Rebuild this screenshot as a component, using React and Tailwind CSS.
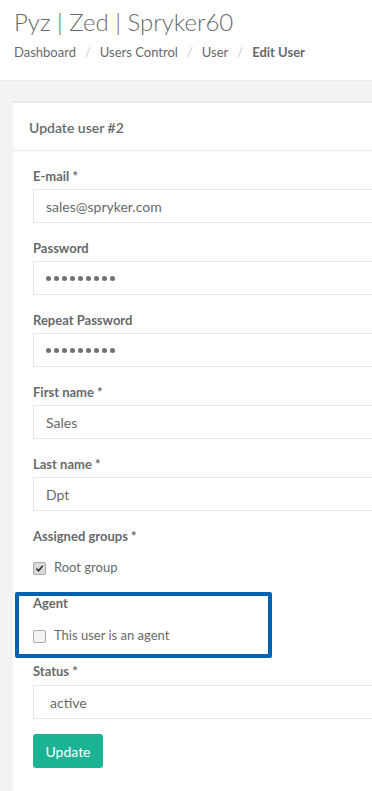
const FIELDS = [
    { label: 'E-mail', required: true, value: 'sales@spryker.com' },
    { label: 'Password', password: true },
    { label: 'Repeat Password', password: true },
    { label: 'First name', required: true, value: 'Sales' },
    { label: 'Last name', required: true, value: 'Dpt' },
];

function FieldLabel({ children, required }) {
    return (
        <label className="block h-5 text-[13px] leading-5 font-bold text-[#676a6c]">
            {children}
            {required && ' *'}
        </label>
    );
}

function Checkbox({ checked }) {
    return (
        <span
            className={`flex h-[13px] w-[13px] items-center justify-center rounded-[2px] border border-[#a9a9a9] ${
                checked ? 'bg-[#dcdcdc]' : 'bg-[#f3f3f3]'
            }`}
        >
            {checked && (
                <svg viewBox="0 0 10 10" className="h-[9px] w-[9px]">
                    <path d="M1.5 5.2 L4 7.6 L8.6 2" fill="none" stroke="#333" strokeWidth="1.9" />
                </svg>
            )}
        </span>
    );
}

function PasswordDots() {
    return (
        <span className="flex gap-[3px]">
            {[1, 2, 3, 4, 5, 6, 7, 8, 9].map((n) => (
                <span key={n} className="h-[5px] w-[5px] rounded-full bg-[#707070]" />
            ))}
        </span>
    );
}

export default function App() {
    return (
        <div className="min-h-[791px] overflow-hidden bg-[#f3f3f4] font-['Lato','Liberation_Sans',sans-serif] text-[13px] text-[#676a6c]">
            <div className="h-[81px] border-b border-[#e7eaec] bg-white pl-[14px] pt-[7px]">
                <h2 className="text-[24px] leading-[30px] font-light text-[#676a6c]">Pyz | Zed | Spryker60</h2>
                <ol className="mt-[5px] flex items-center text-[13px] leading-5">
                    <li>Dashboard</li>
                    <li className="px-[9px] text-[#ccc]">/</li>
                    <li>Users Control</li>
                    <li className="px-[9px] text-[#ccc]">/</li>
                    <li>User</li>
                    <li className="px-[9px] text-[#ccc]">/</li>
                    <li className="font-bold">Edit User</li>
                </ol>
            </div>

            <div className="pl-[13px] pt-[20px]">
                <div className="w-[420px] border-t-2 border-[#e7eaec] bg-white">
                    <div className="h-[48px] border-b border-[#e7eaec] pl-[16px] pt-[15px]">
                        <h5 className="text-[14px] leading-[20px] font-semibold text-[#676a6c]">Update user #2</h5>
                    </div>

                    <div className="relative px-[20px] pt-[15px] pb-[24px]">
                        {FIELDS.map((field) => (
                            <div key={field.label} className="mb-[15px]">
                                <FieldLabel required={field.required}>{field.label}</FieldLabel>
                                <div className="mt-[3px] flex h-[34px] items-center border border-[#e5e6e7] px-[12px] text-[14px] text-[#676a6c]">
                                    {field.password ? <PasswordDots /> : field.value}
                                </div>
                            </div>
                        ))}

                        <div className="mb-[15px]">
                            <FieldLabel required>Assigned groups</FieldLabel>
                            <div className="mt-[12px] flex h-5 items-center gap-[8px] text-[13px]">
                                <Checkbox checked />
                                <span>Root group</span>
                            </div>
                        </div>

                        <div className="mb-[15px]">
                            <FieldLabel>Agent</FieldLabel>
                            <div className="mt-[13px] flex h-5 items-center gap-[8px] text-[13px]">
                                <Checkbox />
                                <span>This user is an agent</span>
                            </div>
                        </div>

                        <div className="mb-[15px]">
                            <FieldLabel required>Status</FieldLabel>
                            <div className="mt-[4px] flex h-[34px] items-center border border-[#e5e6e7] px-[16px] text-[14px]">
                                active
                            </div>
                        </div>

                        <button className="h-[34px] w-[70px] rounded-[3px] bg-[#1ab394] text-[14px] text-white">
                            Update
                        </button>

                        <div className="pointer-events-none absolute top-[441px] left-[2px] h-[66px] w-[257px] rounded-[2px] border-[4px] border-[#0063b1]" />
                    </div>
                </div>
            </div>
        </div>
    );
}
